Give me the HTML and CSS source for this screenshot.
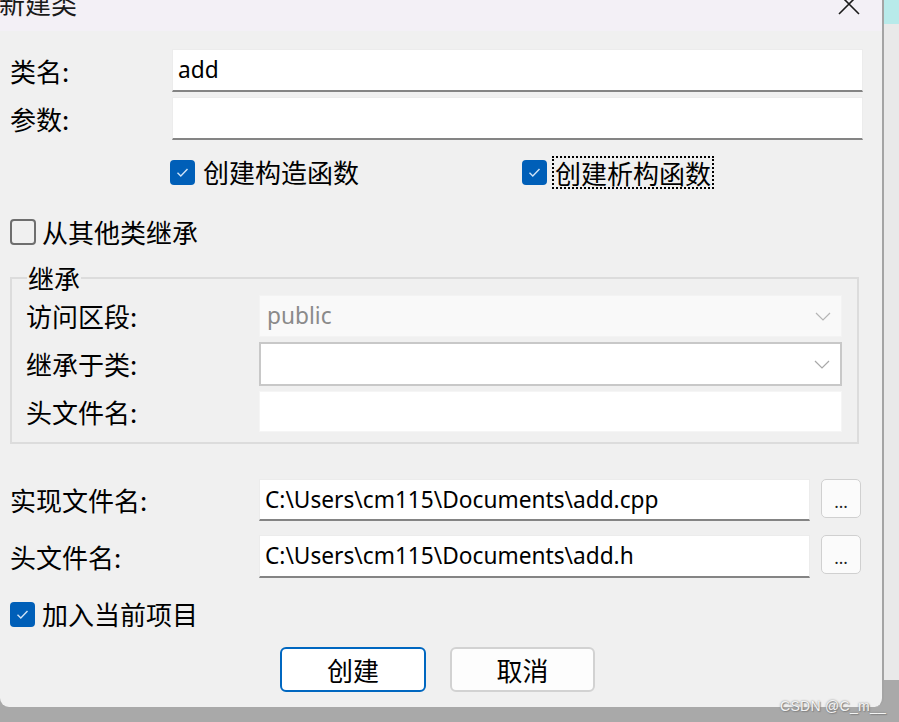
FILE: index.html
```html
<!DOCTYPE html>
<html>
	<head>
		<meta charset="UTF-8">
		<title>新建类</title>
		<link rel="stylesheet" href="styles.css">
	</head>
	<body>
		<div class="screen">
			<div class="dialog">
				<div class="titlebar">
					<span class="title">新建类</span>
					<svg class="close" width="22" height="16" viewBox="0 0 22 16">
						<path d="M1 -6 L21 14 M21 -6 L1 14" stroke="#1b1b1b" stroke-width="1.6" fill="none"/>
					</svg>
				</div>
				<div class="body">
					<div class="row row-top">
						<label class="lbl lbl-top">类名:</label>
						<div class="edit edit-top"><span class="val">add</span></div>
					</div>
					<div class="row row-top row-gap">
						<label class="lbl lbl-top">参数:</label>
						<div class="edit edit-top"></div>
					</div>

					<div class="checks">
						<div class="check-item first">
							<span class="box on">
								<svg width="25" height="25" viewBox="0 0 25 25"><path d="M7.5 12.8 L10.8 16 L17.5 9" stroke="#cfe3f7" stroke-width="1.4" fill="none"/></svg>
							</span>
							<span class="txt">创建构造函数</span>
						</div>
						<div class="check-item">
							<span class="box on">
								<svg width="25" height="25" viewBox="0 0 25 25"><path d="M7.5 12.8 L10.8 16 L17.5 9" stroke="#cfe3f7" stroke-width="1.4" fill="none"/></svg>
							</span>
							<span class="txt focus">创建析构函数</span>
						</div>
					</div>

					<div class="check-item single inherit">
						<span class="box off"></span>
						<span class="txt">从其他类继承</span>
					</div>

					<fieldset class="group">
						<legend>继承</legend>
						<div class="row g1">
							<label class="lbl lbl-wide">访问区段:</label>
							<div class="combo disabled">
								<span class="val grey">public</span>
								<svg class="chev" width="16" height="9" viewBox="0 0 16 9"><path d="M1 1 L8 8 L15 1" stroke="#b5b5b5" stroke-width="1.2" fill="none"/></svg>
							</div>
						</div>
						<div class="row g2">
							<label class="lbl lbl-wide">继承于类:</label>
							<div class="combo open">
								<span class="val"></span>
								<svg class="chev" width="16" height="9" viewBox="0 0 16 9"><path d="M1 1 L8 8 L15 1" stroke="#a8a8a8" stroke-width="1.2" fill="none"/></svg>
							</div>
						</div>
						<div class="row g3">
							<label class="lbl lbl-wide">头文件名:</label>
							<div class="edit plain"></div>
						</div>
					</fieldset>

					<div class="row file f1">
						<label class="lbl lbl-file">实现文件名:</label>
						<div class="edit edit-file"><span class="val">C:\Users\cm115\Documents\add.cpp</span></div>
						<button class="browse">...</button>
					</div>
					<div class="row file f2">
						<label class="lbl lbl-file">头文件名:</label>
						<div class="edit edit-file"><span class="val">C:\Users\cm115\Documents\add.h</span></div>
						<button class="browse">...</button>
					</div>

					<div class="check-item single addproj">
						<span class="box on">
							<svg width="25" height="25" viewBox="0 0 25 25"><path d="M7.5 12.8 L10.8 16 L17.5 9" stroke="#cfe3f7" stroke-width="1.4" fill="none"/></svg>
						</span>
						<span class="txt">加入当前项目</span>
					</div>

					<div class="actions">
						<button class="btn primary">创建</button>
						<button class="btn">取消</button>
					</div>
				</div>
			</div>
			<div class="side">
				<div class="side-top"></div>
			</div>
		</div>
		<div class="watermark">CSDN @C_m__</div>
	</body>
</html>
```

FILE: styles.css
```css
*{
	margin: 0;
	padding: 0;
	box-sizing: border-box;
}
html,body{
	width: 899px;
	height: 722px;
	overflow: hidden;
}
body{
	background: #a9a9a9;
	font-family: "Noto Sans", "Noto Sans CJK SC", sans-serif;
	font-size: 21px;
	color: #000;
	position: relative;
}
.screen{
	display: flex;
	align-items: flex-start;
}
.dialog{
	width: 884px;
	height: 707px;
	background: #f0f0f0;
	border-right: 2px solid #a4a4a4;
	border-radius: 0 0 9px 9px;
	overflow: hidden;
}
.side{
	width: 15px;
	height: 680px;
	background: #e9e9e9;
}
.side-top{
	height: 24px;
	background: #b8eaea;
}

/* 标题栏 */
.titlebar{
	height: 31px;
	background: #f3f0f6;
	display: flex;
	justify-content: space-between;
	align-items: flex-start;
	overflow: hidden;
}
.title{
	font-family: "Noto Sans CJK SC", sans-serif;
	font-size: 26px;
	line-height: 26px;
	margin-top: -10px;
	margin-left: -1px;
	color: #1a1a1a;
}
.close{
	margin-right: 22px;
	display: block;
}

/* 内容 */
.body{
	padding: 18px 19px 0 10px;
	display: flex;
	flex-direction: column;
}
.row{
	display: flex;
	align-items: center;
}
.lbl{
	font-family: "Noto Sans CJK SC", sans-serif;
	font-size: 26px;
	line-height: 30px;
	flex: none;
}
.lbl-top{
	width: 162px;
}
.lbl-wide{
	width: 233px;
}
.lbl-file{
	width: 249px;
}
.row-top{
	height: 43px;
}
.row-gap{
	margin-top: 5px;
}
.edit{
	height: 100%;
	background: #fff;
	border: 1px solid #ececec;
	display: flex;
	align-items: center;
	padding-left: 5px;
}
.edit-top{
	width: 691px;
	border-bottom: 2px solid #848484;
}
.val{
	font-size: 22.7px;
	line-height: 28px;
	white-space: nowrap;
}
.grey{
	color: #8a8a8a;
}

/* 复选框 */
.checks{
	margin-top: 18px;
	padding-left: 160px;
	display: flex;
	height: 28px;
}
.check-item{
	display: flex;
	align-items: center;
	height: 28px;
}
.check-item.first{
	width: 352px;
}
.box{
	width: 25px;
	height: 25px;
	border-radius: 4px;
	flex: none;
	display: block;
}
.box svg{
	display: block;
}
.box.on{
	background: #005fb8;
}
.box.off{
	border: 2px solid #6e6e6e;
	width: 26px;
	height: 26px;
}
.txt{
	font-family: "Noto Sans CJK SC", sans-serif;
	font-size: 26px;
	line-height: 30px;
	margin-left: 8px;
	white-space: nowrap;
}
.txt.focus{
	border: 2px dotted #000;
	line-height: 29px;
	margin-left: 5px;
	padding: 0 1px;
}
.inherit{
	margin-top: 32px;
}
.inherit .txt{
	margin-left: 6px;
}

/* 继承分组 */
.group{
	margin-top: 19px;
	width: 849px;
	border: 2px solid #dcdcdc;
	padding: 4px 15px 10px 14px;
}
.group legend{
	font-family: "Noto Sans CJK SC", sans-serif;
	font-size: 26px;
	line-height: 26px;
	padding: 0 1px;
	margin-left: 1px;
}
.g1{
	height: 42px;
}
.g2{
	height: 44px;
	margin-top: 5px;
}
.g3{
	height: 41px;
	margin-top: 5px;
}
.combo{
	width: 583px;
	height: 100%;
	display: flex;
	align-items: center;
	justify-content: space-between;
	padding: 0 10px 0 7px;
}
.combo.disabled{
	background: #f9f9f9;
	border: 1px solid #f3f3f3;
}
.combo.open{
	background: #fff;
	border: 2px solid #c8c8c8;
	padding-left: 6px;
}
.chev{
	display: block;
}
.edit.plain{
	width: 583px;
	border: 1px solid #f5f5f5;
}

/* 文件 */
.file{
	height: 42px;
}
.f1{
	margin-top: 35px;
}
.f2{
	margin-top: 14px;
	height: 43px;
}
.edit-file{
	width: 551px;
	border-bottom: 2px solid #848484;
}
.browse{
	margin-left: 11px;
	width: 40px;
	height: 39px;
	align-self: flex-start;
	background: #fbfbfb;
	border: 1px solid #d0d0d0;
	border-radius: 5px;
	font-family: "Noto Sans", sans-serif;
	font-size: 17px;
	line-height: 14px;
	padding-top: 6px;
	color: #222;
}
.addproj{
	margin-top: 22px;
}
.addproj .txt{
	margin-left: 7px;
}

/* 按钮 */
.actions{
	margin-top: 19px;
	padding-left: 270px;
	display: flex;
	gap: 24px;
}
.btn{
	width: 146px;
	height: 45px;
	background: #fdfdfd;
	border: 2px solid #d2d2d2;
	border-radius: 6px;
	font-family: "Noto Sans CJK SC", sans-serif;
	font-size: 26px;
	color: #000;
}
.btn + .btn{
	width: 145px;
}
.btn.primary{
	background: #fff;
	border-color: #0067c0;
}

.watermark{
	position: absolute;
	left: 780px;
	top: 698px;
	font-family: "Liberation Sans", sans-serif;
	font-size: 14px;
	color: #f4f4f4;
	text-shadow: 0 0 2px #777, 1px 1px 1px #888;
	letter-spacing: 0.3px;
}
```
